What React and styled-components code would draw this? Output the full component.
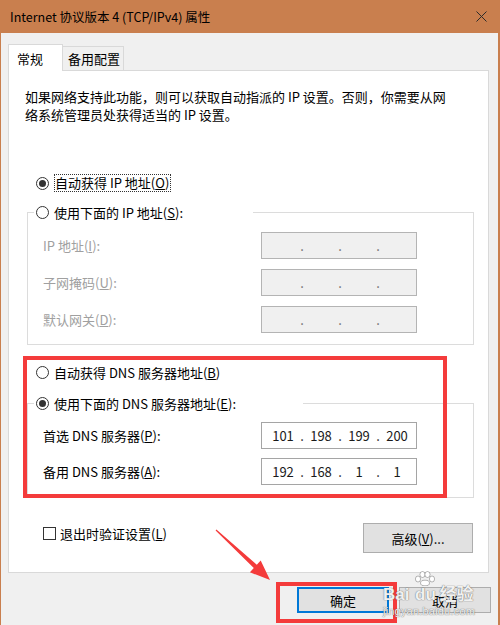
import React from 'react';
import styled, { createGlobalStyle } from 'styled-components';

const ORANGE = '#c97f4e';
const RED = '#f43b3b';

const GlobalStyle = createGlobalStyle`
  html, body { margin: 0; padding: 0; background: #f0f0f0; }
  body {
    font-family: "Microsoft YaHei UI", "Segoe UI", "Noto Sans CJK SC", sans-serif;
    color: #000;
  }
`;

const Window = styled.div`
  position: relative;
  width: 500px;
  height: 625px;
  box-sizing: border-box;
  border-left: 1px solid ${ORANGE};
  border-right: 2px solid ${ORANGE};
  background: #f0f0f0;
  display: flex;
  flex-direction: column;
  overflow: hidden;
`;

const TitleBar = styled.div`
  flex: none;
  height: 33px;
  background: ${ORANGE};
  display: flex;
  align-items: center;
  justify-content: space-between;
  padding: 0 11px 0 9px;
  font-size: 12.5px;
`;

const Body = styled.div`
  flex: 1;
  padding: 11px 9px 0 7px;
  display: flex;
  flex-direction: column;
`;

const TabStrip = styled.div`
  display: flex;
  align-items: flex-end;
  height: 26px;
`;

const Tab = styled.div`
  position: relative;
  z-index: ${p => (p.$active ? 2 : 1)};
  box-sizing: border-box;
  width: ${p => (p.$active ? 55 : 61)}px;
  height: ${p => (p.$active ? 27 : 24)}px;
  margin-bottom: ${p => (p.$active ? -1 : 0)}px;
  padding-left: ${p => (p.$active ? 8 : 5)}px;
  background: ${p => (p.$active ? '#fff' : '#f0f0f0')};
  border: 1px solid #d9d9d9;
  border-bottom: none;
  ${p => !p.$active && 'border-left: none;'}
  display: flex;
  align-items: center;
  font-size: 13px;
`;

const Panel = styled.div`
  position: relative;
  background: #fff;
  border: 1px solid #d9d9d9;
  padding: 17px 14px 19px 16px;
  display: flex;
  flex-direction: column;
`;

const Desc = styled.p`
  margin: 0;
  font-size: 13px;
  line-height: 18px;
`;

const RadioRow = styled.div`
  display: flex;
  align-items: center;
  gap: 5px;
  height: 18px;
  margin-top: ${p => p.$mt || 0}px;
  padding-left: 11px;
  font-size: 13px;
`;

const RadioCircle = styled.span`
  flex: none;
  width: 13px;
  height: 13px;
  box-sizing: border-box;
  border: 1px solid #333;
  border-radius: 50%;
  background: #fff;
  display: flex;
  align-items: center;
  justify-content: center;
  &::after {
    content: '';
    width: 7px;
    height: 7px;
    border-radius: 50%;
    background: #333;
    display: ${p => (p.$checked ? 'block' : 'none')};
  }
`;

const FocusLabel = styled.span`
  border: 1px dotted #333;
  padding-right: 1px;
  line-height: 16px;
`;

const Group = styled.fieldset`
  margin: ${p => p.$mt}px 0 0 2px;
  padding: 0 0 ${p => p.$pb}px 0;
  border: 1px solid #dcdcdc;
  min-width: 0;
`;

const Legend = styled.legend`
  box-sizing: border-box;
  width: ${p => p.$w}px;
  height: 18px;
  margin-left: 6px;
  padding: 0 0 0 2px;
  background: #fff;
  display: flex;
  align-items: center;
  gap: 5px;
  font-size: 13px;
`;

const Rows = styled.div`
  display: flex;
  flex-direction: column;
  gap: ${p => p.$gap}px;
  padding: ${p => p.$pt}px 56px 0 15px;
`;

const FieldRow = styled.div`
  display: flex;
  align-items: center;
  justify-content: space-between;
  height: 27px;
  font-size: 13px;
  color: ${p => (p.$disabled ? '#a0a0a0' : '#000')};
`;

const IpBox = styled.div`
  box-sizing: border-box;
  width: 156px;
  height: 27px;
  padding-left: 3px;
  border: 1px solid ${p => (p.$disabled ? '#b4b4b4' : '#a5a5a5')};
  background: ${p => (p.$disabled ? '#f0f0f0' : '#fff')};
  display: flex;
  align-items: center;
  font-size: 13px;
  color: ${p => (p.$disabled ? '#6d6d6d' : '#1a1a1a')};
`;

const Seg = styled.span`
  width: 36px;
  text-align: center;
`;

const Dot = styled.span`
  width: 2px;
  display: flex;
  justify-content: center;
`;

const DnsSection = styled.div`
  position: relative;
  margin-top: 18px;
  display: flex;
  flex-direction: column;
`;

const Highlight = styled.div`
  position: absolute;
  top: ${p => p.$top}px;
  left: ${p => p.$left}px;
  width: ${p => p.$w}px;
  height: ${p => p.$h}px;
  box-sizing: border-box;
  border: 4px solid ${RED};
  pointer-events: none;
  z-index: 3;
`;

const BottomRow = styled.div`
  display: flex;
  justify-content: space-between;
  align-items: flex-start;
  margin: 25px 1px 0 0;
  padding-left: 18px;
`;

const CheckLabel = styled.label`
  display: flex;
  align-items: center;
  gap: 4px;
  height: 18px;
  margin-top: 1px;
  font-size: 13px;
`;

const CheckBox = styled.span`
  width: 13px;
  height: 13px;
  box-sizing: border-box;
  border: 1px solid #333;
  background: #fff;
`;

const Button = styled.div`
  box-sizing: border-box;
  width: ${p => p.$w}px;
  height: ${p => p.$h}px;
  background: #e1e1e1;
  border: ${p => (p.$default ? '2px solid #0078d7' : '1px solid #adadad')};
  display: flex;
  align-items: center;
  justify-content: center;
  font-size: 13px;
`;

const Footer = styled.div`
  display: flex;
  justify-content: flex-end;
  gap: 10px;
  margin: 14px -2px 0 0;
`;

const OkWrap = styled.div`
  position: relative;
  display: flex;
`;

const Arrow = styled.svg`
  position: absolute;
  left: 199px;
  top: 520px;
  pointer-events: none;
  z-index: 4;
`;

const Watermark = styled.div`
  position: absolute;
  left: 382px;
  top: 572px;
  width: 95px;
  pointer-events: none;
  z-index: 5;
  color: rgba(255, 255, 255, 0.92);
  font-family: "Liberation Sans", "Noto Sans CJK SC", sans-serif;
  text-shadow: 0 0 1px rgba(90, 90, 90, 0.7), 0 0 1px rgba(90, 90, 90, 0.7);
`;

const MarkTop = styled.div`
  display: flex;
  align-items: flex-end;
  height: 31px;
  font-size: 17px;
  font-weight: bold;
  line-height: 17px;
`;

const PawWord = styled.span`
  display: flex;
  flex-direction: column;
  align-items: center;
  margin: 0 3px 0 5px;
`;

const MarkSub = styled.div`
  margin-top: 2px;
  font-size: 11px;
  line-height: 12px;
  letter-spacing: 0.2px;
`;

function Ip({ parts, disabled }) {
  const p = parts || ['', '', '', ''];
  return (
    <IpBox $disabled={disabled}>
      <Seg>{p[0]}</Seg><Dot>.</Dot>
      <Seg>{p[1]}</Seg><Dot>.</Dot>
      <Seg>{p[2]}</Seg><Dot>.</Dot>
      <Seg>{p[3]}</Seg>
    </IpBox>
  );
}

export default function App() {
  return (
    <>
      <GlobalStyle />
      <Window>
        <TitleBar>
          <span>Internet 协议版本 4 (TCP/IPv4) 属性</span>
          <svg width="11" height="11" viewBox="0 0 11 11">
            <path d="M0.5 0.5L10.5 10.5M10.5 0.5L0.5 10.5" stroke="#2b2b2b" strokeWidth="1" />
          </svg>
        </TitleBar>

        <Body>
          <TabStrip>
            <Tab $active>常规</Tab>
            <Tab>备用配置</Tab>
          </TabStrip>

          <Panel>
            <Desc>
              如果网络支持此功能，则可以获取自动指派的 IP 设置。否则，你需要从网<br />
              络系统管理员处获得适当的 IP 设置。
            </Desc>

            <RadioRow $mt={50}>
              <RadioCircle $checked />
              <FocusLabel>自动获得 IP 地址(<u>O</u>)</FocusLabel>
            </RadioRow>

            <Group $mt={11} $pb={11}>
              <Legend $w={219}>
                <RadioCircle />
                <span>使用下面的 IP 地址(<u>S</u>):</span>
              </Legend>
              <Rows $pt={11} $gap={10}>
                <FieldRow $disabled>
                  <span>IP 地址(<u>I</u>):</span>
                  <Ip disabled />
                </FieldRow>
                <FieldRow $disabled>
                  <span>子网掩码(<u>U</u>):</span>
                  <Ip disabled />
                </FieldRow>
                <FieldRow $disabled>
                  <span>默认网关(<u>D</u>):</span>
                  <Ip disabled />
                </FieldRow>
              </Rows>
            </Group>

            <DnsSection>
              <Highlight $top={-7} $left={-2} $w={424} $h={142} />
              <RadioRow>
                <RadioCircle />
                <span>自动获得 DNS 服务器地址(<u>B</u>)</span>
              </RadioRow>
              <Group $mt={13} $pb={12}>
                <Legend $w={269}>
                  <RadioCircle $checked />
                  <span>使用下面的 DNS 服务器地址(<u>E</u>):</span>
                </Legend>
                <Rows $pt={10} $gap={9}>
                  <FieldRow>
                    <span>首选 DNS 服务器(<u>P</u>):</span>
                    <Ip parts={['101', '198', '199', '200']} />
                  </FieldRow>
                  <FieldRow>
                    <span>备用 DNS 服务器(<u>A</u>):</span>
                    <Ip parts={['192', '168', '1', '1']} />
                  </FieldRow>
                </Rows>
              </Group>
            </DnsSection>

            <BottomRow>
              <CheckLabel>
                <CheckBox />
                <span>退出时验证设置(<u>L</u>)</span>
              </CheckLabel>
              <Button $w={110} $h={30}>高级(<u>V</u>)...</Button>
            </BottomRow>
          </Panel>

          <Footer>
            <OkWrap>
              <Button $w={92} $h={26} $default>确定</Button>
              <Highlight $top={-5} $left={-21} $w={121} $h={41} />
            </OkWrap>
            <Button $w={92} $h={26}>取消</Button>
          </Footer>
        </Body>

        <Arrow width="80" height="70" viewBox="0 0 80 70">
          <polygon
            points="16.4,9.6 56.8,44.8 60.7,40.5 70,60 49.9,52.3 53.8,48 15.6,10.4"
            fill={RED}
          />
        </Arrow>

        <Watermark>
          <MarkTop>
            <span>Bai</span>
            <PawWord>
              <svg width="22" height="15" viewBox="0 0 22 15">
                <g fill="#fff" stroke="rgba(90,90,90,0.55)" strokeWidth="0.8">
                  <ellipse cx="4" cy="8" rx="2.6" ry="3" />
                  <ellipse cx="8.5" cy="3.5" rx="2.6" ry="3" />
                  <ellipse cx="13.5" cy="3.5" rx="2.6" ry="3" />
                  <ellipse cx="18" cy="8" rx="2.6" ry="3" />
                  <ellipse cx="11" cy="12" rx="4.5" ry="2.8" />
                </g>
              </svg>
              <span>du</span>
            </PawWord>
            <span>经验</span>
          </MarkTop>
          <MarkSub>jingyan.baidu.com</MarkSub>
        </Watermark>
      </Window>
    </>
  );
}
